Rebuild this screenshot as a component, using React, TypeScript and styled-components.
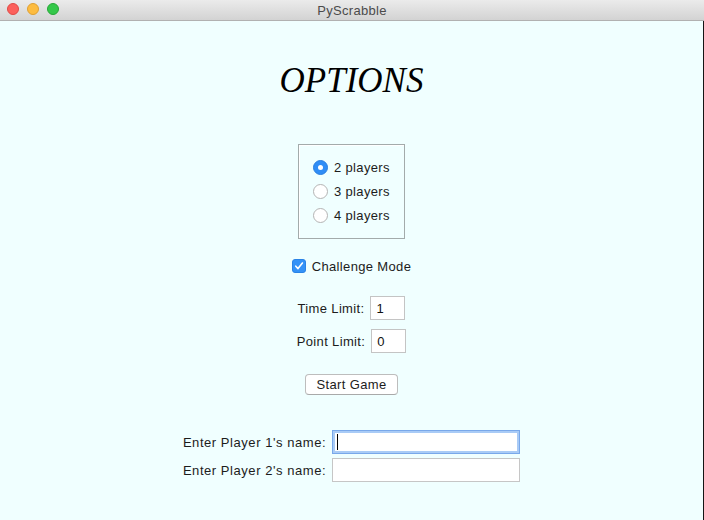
import styled, { createGlobalStyle } from "styled-components";

const GlobalStyle = createGlobalStyle`
  html, body {
    margin: 0;
    padding: 0;
    width: 704px;
    height: 520px;
    overflow: hidden;
    background: #f0ffff;
  }
  * {
    box-sizing: border-box;
  }
`;

const players = ["2 players", "3 players", "4 players"];

export default function App() {
  return (
    <Window>
      <GlobalStyle />
      <TitleBar>
        <Lights>
          <Light $fill="#fc605c" $edge="#e04a45" />
          <Light $fill="#fdbc40" $edge="#dfa032" />
          <Light $fill="#34c84a" $edge="#27a737" />
        </Lights>
        <WindowTitle>PyScrabble</WindowTitle>
      </TitleBar>

      <Content>
        <Heading>OPTIONS</Heading>

        <RadioGroup>
          {players.map((label, i) => (
            <RadioRow key={label}>
              <Radio $checked={i === 0} />
              <span>{label}</span>
            </RadioRow>
          ))}
        </RadioGroup>

        <CheckRow>
          <CheckBox>
            <svg width="10" height="10" viewBox="0 0 10 10">
              <path
                d="M1.8 5.2 L4 7.6 L8.4 2"
                fill="none"
                stroke="#fff"
                strokeWidth="1.6"
                strokeLinecap="round"
                strokeLinejoin="round"
              />
            </svg>
          </CheckBox>
          <span>Challenge Mode</span>
        </CheckRow>

        <FieldRow $top={20}>
          <span>Time Limit:</span>
          <SmallEntry>1</SmallEntry>
        </FieldRow>
        <FieldRow $top={9}>
          <span>Point Limit:</span>
          <SmallEntry>0</SmallEntry>
        </FieldRow>

        <StartButton>Start Game</StartButton>

        <NameGrid>
          <NameLabel>Enter Player 1's name:</NameLabel>
          <NameEntry $focused>
            <Caret />
          </NameEntry>
          <NameLabel>Enter Player 2's name:</NameLabel>
          <NameEntry />
        </NameGrid>
      </Content>
    </Window>
  );
}

// --------styled components---------
const Window = styled.div`
  width: 704px;
  height: 520px;
  display: flex;
  flex-direction: column;
  font-family: "Liberation Sans", Arial, sans-serif;
  font-size: 13px;
  letter-spacing: 0.35px;
  color: #1c1c1c;
`;

const TitleBar = styled.div`
  position: relative;
  height: 21px;
  flex: none;
  display: flex;
  align-items: center;
  justify-content: center;
  background: linear-gradient(#ebebeb, #d3d3d3);
  border-bottom: 1px solid #b1b1b1;
`;

const Lights = styled.div`
  position: absolute;
  left: 7px;
  top: 3px;
  display: flex;
  gap: 8px;
`;

const Light = styled.div<{ $fill: string; $edge: string }>`
  width: 12px;
  height: 12px;
  border-radius: 50%;
  background: ${(p) => p.$fill};
  border: 0.5px solid ${(p) => p.$edge};
`;

const WindowTitle = styled.div`
  font-size: 13px;
  color: #4b4b4b;
  letter-spacing: 0.3px;
`;

const Content = styled.div`
  flex: 1;
  display: flex;
  flex-direction: column;
  align-items: center;
  background: #f0ffff;
  border-right: 1px solid #151515;
`;

const Heading = styled.h1`
  margin: 40px 0 0;
  height: 40px;
  line-height: 40px;
  font-family: "Liberation Serif", "Times New Roman", serif;
  font-style: italic;
  font-weight: normal;
  font-size: 35px;
  letter-spacing: 0;
  color: #000;
`;

const RadioGroup = styled.div`
  margin-top: 43px;
  width: 107px;
  height: 95px;
  padding: 10px 0 0 14px;
  border: 1px solid #a3abab;
  box-shadow: inset 1px 1px 0 #ffffff;
  display: flex;
  flex-direction: column;
`;

const RadioRow = styled.div`
  height: 24px;
  display: flex;
  align-items: center;
  gap: 6px;
  white-space: nowrap;
`;

const Radio = styled.div<{ $checked?: boolean }>`
  width: 15px;
  height: 15px;
  border-radius: 50%;
  flex: none;
  display: flex;
  align-items: center;
  justify-content: center;
  background: ${(p) => (p.$checked ? "#2f8df6" : "#ffffff")};
  border: 1px solid ${(p) => (p.$checked ? "#2a7fe0" : "#b4b4b4")};
  &::after {
    content: "";
    width: 5px;
    height: 5px;
    border-radius: 50%;
    background: #fff;
    display: ${(p) => (p.$checked ? "block" : "none")};
  }
`;

const CheckRow = styled.div`
  margin-top: 17px;
  height: 20px;
  display: flex;
  align-items: center;
  gap: 6px;
`;

const CheckBox = styled.div`
  width: 14px;
  height: 14px;
  border-radius: 3px;
  background: #3492f7;
  border: 1px solid #2a83e6;
  display: flex;
  align-items: center;
  justify-content: center;
`;

const FieldRow = styled.div<{ $top: number }>`
  margin-top: ${(p) => p.$top}px;
  display: flex;
  align-items: center;
  gap: 6px;
`;

const SmallEntry = styled.div`
  width: 35px;
  height: 24px;
  padding-left: 5px;
  display: flex;
  align-items: center;
  background: #fff;
  border: 1px solid #c4c4c4;
  color: #111;
`;

const StartButton = styled.button`
  margin-top: 21px;
  width: 93px;
  height: 21px;
  padding: 0;
  background: #fff;
  border: 1px solid #bdbdbd;
  border-bottom-color: #a9a9a9;
  border-radius: 4px;
  font-family: inherit;
  font-size: 13px;
  letter-spacing: 0.35px;
  color: #1c1c1c;
`;

const NameGrid = styled.div`
  margin-top: 35px;
  display: grid;
  grid-template-columns: auto 188px;
  column-gap: 6px;
  row-gap: 4px;
  align-items: center;
`;

const NameLabel = styled.span`
  letter-spacing: 0.55px;
`;

const NameEntry = styled.div<{ $focused?: boolean }>`
  height: 24px;
  display: flex;
  align-items: center;
  padding-left: 4px;
  background: #fff;
  border: 1px solid ${(p) => (p.$focused ? "#79a8ea" : "#c6c6c6")};
  box-shadow: ${(p) => (p.$focused ? "inset 0 0 0 2px #a9cbf6" : "none")};
`;

const Caret = styled.div`
  width: 1px;
  height: 16px;
  background: #000;
`;
